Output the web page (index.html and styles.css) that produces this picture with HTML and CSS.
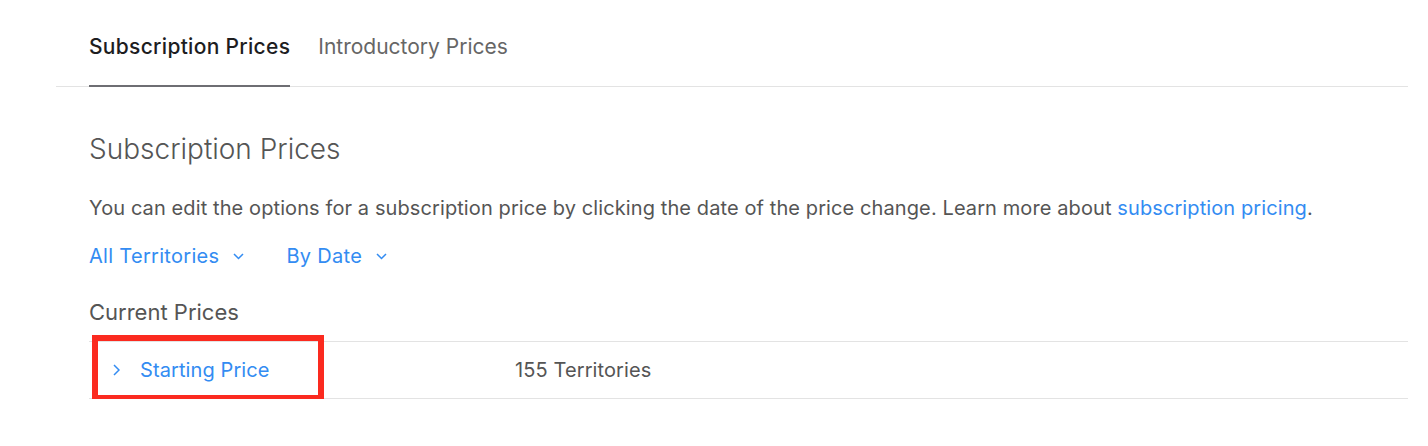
FILE: index.html
```html
<!DOCTYPE html>
<html>
<head>
<meta charset="utf-8">
<link rel="stylesheet" href="styles.css">
</head>
<body>
<div class="page">
  <nav class="tabs">
    <div class="tab active">Subscription Prices</div>
    <div class="tab">Introductory Prices</div>
  </nav>
  <section class="content">
    <h1 class="title">Subscription Prices</h1>
    <p class="desc">You can edit the options for a subscription price by clicking the date of the price change. Learn more about <a class="link">subscription pricing</a>.</p>
    <div class="filters">
      <div class="filter">All Territories
        <svg class="chev" width="11" height="7" viewBox="0 0 11 7"><path d="M1 1l4.5 4.5L10 1" fill="none" stroke="currentColor" stroke-width="1.5"/></svg>
      </div>
      <div class="filter">By Date
        <svg class="chev" width="11" height="7" viewBox="0 0 11 7"><path d="M1 1l4.5 4.5L10 1" fill="none" stroke="currentColor" stroke-width="1.5"/></svg>
      </div>
    </div>
    <h2 class="subtitle">Current Prices</h2>
    <div class="table">
      <div class="row">
        <div class="cell name">
          <svg class="rchev" width="7" height="12" viewBox="0 0 7 12"><path d="M1 1l5 5-5 5" fill="none" stroke="currentColor" stroke-width="1.5"/></svg>
          <span>Starting Price</span>
        </div>
        <div class="cell count">155 Territories</div>
        <div class="highlight"></div>
      </div>
    </div>
  </section>
</div>
</body>
</html>
```
FILE: styles.css
```css
html, body {
  margin: 0;
  padding: 0;
  background: #fff;
}
body {
  font-family: Inter, "Noto Sans", sans-serif;
  color: #555;
}
.page {
  width: 1428px;
}
.tabs {
  margin: 0 20px 0 56px;
  padding-left: 33px;
  display: flex;
  gap: 28px;
  border-bottom: 1px solid #e3e3e3;
  height: 87px;
  box-sizing: border-box;
}
.tab {
  font-size: 21px;
  line-height: 24px;
  padding-top: 35px;
  color: #666;
}
.tab.active {
  color: #1d1d1f;
  font-weight: 500;
  letter-spacing: 0.3px;
  border-bottom: 2px solid #6e6e73;
  margin-bottom: -1px;
  box-sizing: border-box;
}
.content {
  margin: 0 20px 0 89px;
}
.title {
  margin: 0;
  padding-top: 44px;
  font-size: 28px;
  font-weight: 300;
  line-height: 36px;
  color: #555;
}
.desc {
  margin: 29px 0 0;
  font-size: 20px;
  line-height: 24px;
  letter-spacing: 0.1px;
  color: #555;
}
.link {
  color: #338cf2;
}
.filters {
  display: flex;
  gap: 42px;
  margin-top: 24px;
}
.filter {
  font-size: 20px;
  line-height: 24px;
  letter-spacing: 0.3px;
  color: #338cf2;
  display: flex;
  align-items: center;
  gap: 14px;
}
.chev {
  display: block;
}
.subtitle {
  margin: 30px 0 0;
  font-size: 22px;
  font-weight: 400;
  line-height: 28px;
  color: #555;
}
.table {
  margin-top: 15px;
}
.row {
  position: relative;
  display: flex;
  align-items: center;
  height: 58px;
  border-top: 1px solid #e3e3e3;
  border-bottom: 1px solid #e3e3e3;
  box-sizing: border-box;
  font-size: 20px;
  letter-spacing: 0.1px;
}
.cell.name {
  width: 426px;
  display: flex;
  align-items: center;
  color: #338cf2;
}
.rchev {
  margin-left: 24px;
  margin-right: 20px;
}
.highlight {
  position: absolute;
  left: 3px;
  top: -7px;
  width: 232px;
  height: 66px;
  border: 6px solid #fb2a1f;
  box-sizing: border-box;
}
.cell.count {
  color: #555;
}
```
